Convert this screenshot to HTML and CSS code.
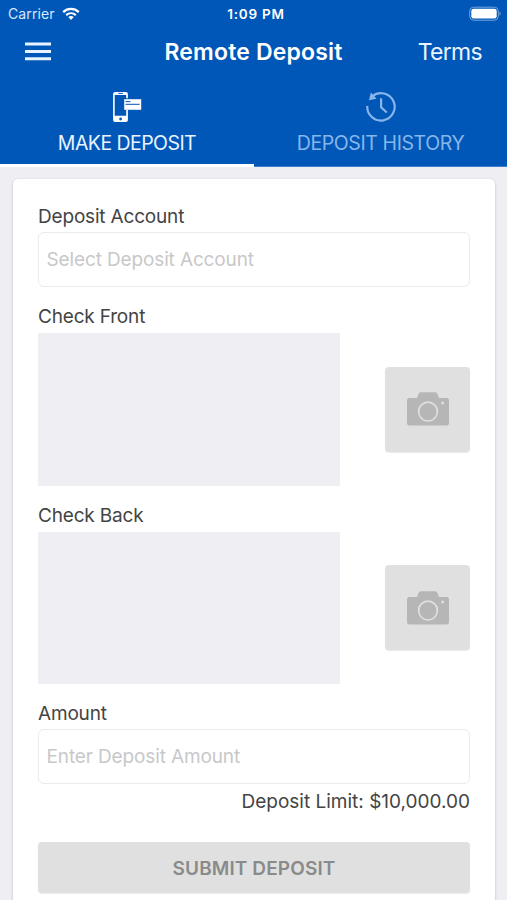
FILE: index.html
```html
<!DOCTYPE html>
<html lang="en">
<head>
<meta charset="utf-8">
<title>Remote Deposit</title>
<link rel="stylesheet" href="styles.css">
</head>
<body>
<header class="header">
  <div class="status">
    <div class="carrier"><span class="carrier-name">Carrier</span>
      <svg class="wifi" width="18" height="14" viewBox="0 0 18 14" fill="none" stroke="#fff" stroke-width="2.2"><path d="M1.2 5.1C5.7 .9 12.3 .9 16.8 5.1M4.2 8.1C7 5.6 11 5.6 13.8 8.1"/><path d="M6.3 10.1Q9 7.9 11.7 10.1L9 12.9Z" fill="#fff" stroke="none"/></svg>
    </div>
    <span class="time">1:09 PM</span>
    <svg class="battery" width="33" height="16" viewBox="0 0 33 16"><rect x=".7" y="1.2" width="28.6" height="13" rx="4" fill="none" stroke="#77a5dd" stroke-width="1"/><rect x="2.3" y="2.8" width="25.4" height="9.8" rx="2.4" fill="#fff"/><path d="M30.5 5.5Q33 7.7 30.5 10Z" fill="#77a5dd"/></svg>
  </div>
  <nav class="nav">
    <svg class="menu" width="26" height="19" viewBox="0 0 26 19" fill="#e8f4ff"><path d="M0 .5h26v3H0zM0 8h26v3H0zM0 15.2h26v3H0z"/></svg>
    <h1 class="title">Remote Deposit</h1>
    <a class="terms">Terms</a>
  </nav>
  <div class="tabs">
    <div class="tab active">
      <svg class="tab-icon" width="30" height="32" viewBox="0 0 30 32"><path fill="#fff" fill-rule="evenodd" d="M3.1 1h10.8a2 2 0 0 1 2 2v4.300h-1.700V4H2.700v20.800h11.500v-6h1.700V29a2 2 0 0 1-2 2H3.100a2 2 0 0 1-2-2V3a2 2 0 0 1 2-2z"/><path fill="#fff" d="M12.200 8.200h17v10.600h-17z"/><path d="M6.300 2.400h4.500" stroke="#0057b8" stroke-width="1"/><circle cx="8.600" cy="28" r="1.400" fill="#0057b8"/><path d="M13.500 10.600h5M13.500 13.300h14.200" stroke="#0057b8" stroke-width="1"/></svg>
      <span class="tab-label">MAKE DEPOSIT</span>
    </div>
    <div class="tab">
      <svg class="tab-icon" width="30" height="32" viewBox="0 0 30 32" fill="none" stroke="#86b6ea" stroke-width="2.200"><path d="M1.300 14.800A13.700 13.700 0 1 0 6.200 5.300M15.100 7.200V16.300L20.800 21.500"/><path d="M4.900 1.500L2.900 9.200L10.600 7.800Z" fill="#86b6ea" stroke="none"/></svg>
      <span class="tab-label history-label">DEPOSIT HISTORY</span>
    </div>
  </div>
</header>
<main class="card">
  <label class="label">Deposit Account</label>
  <div class="field">Select Deposit Account</div>
  <div class="label gap">Check Front</div>
  <div class="photo-row">
    <div class="preview"></div>
    <div class="camera"><svg width="42" height="34" viewBox="0 0 42 34"><path fill="#b6b6b6" d="M2.500 6H10l1.600-4.200Q12.200.2 13.800.2h14.400q1.600 0 2.200 1.600L32 6h7.500Q42 6 42 8.500v22.700q0 2.400-2.500 2.400h-37Q0 33.600 0 31.200V8.500Q0 6 2.500 6Z"/><circle cx="21" cy="19.600" r="9.400" fill="none" stroke="#e0e0e0" stroke-width="1.700"/><circle cx="35.700" cy="11" r="1.500" fill="#e0e0e0"/></svg></div>
  </div>
  <div class="label gap">Check Back</div>
  <div class="photo-row">
    <div class="preview"></div>
    <div class="camera"><svg width="42" height="34" viewBox="0 0 42 34"><path fill="#b6b6b6" d="M2.500 6H10l1.600-4.200Q12.200.2 13.800.2h14.400q1.600 0 2.200 1.600L32 6h7.500Q42 6 42 8.500v22.700q0 2.400-2.500 2.400h-37Q0 33.600 0 31.200V8.500Q0 6 2.500 6Z"/><circle cx="21" cy="19.600" r="9.400" fill="none" stroke="#e0e0e0" stroke-width="1.700"/><circle cx="35.700" cy="11" r="1.500" fill="#e0e0e0"/></svg></div>
  </div>
  <div class="label gap amount-label">Amount</div>
  <div class="field amount-field">Enter Deposit Amount</div>
  <div class="limit">Deposit Limit: $10,000.00</div>
  <button class="submit">SUBMIT DEPOSIT</button>
</main>
</body>
</html>
```
FILE: styles.css
```css
* { box-sizing: border-box; }
body {
  margin: 0;
  height: 900px;
  overflow: hidden;
  background: #eeeef3;
  font-family: Inter, "Liberation Sans", sans-serif;
  font-size: 19px;
  color: #444;
}
svg { display: block; }
.header { background: #0057b8; color: #fff; height: 167px; }
.status {
  display: grid;
  grid-template-columns: 1fr auto 1fr;
  height: 27px;
  align-items: center;
  padding: 0 5px 0 8px;
  font-size: 14px;
}
.carrier { display: flex; align-items: center; gap: 7px; color: #d5e8ff; }
.carrier-name { letter-spacing: 0.1px; }
.time { font-weight: 600; font-size: 13.5px; letter-spacing: 0.75px; padding-left: 2px; }
.battery { justify-self: end; }
.nav {
  display: grid;
  grid-template-columns: 1fr auto 1fr;
  align-items: center;
  height: 49px;
  padding: 0 25px;
}
.title { margin: 0; padding-top: 2px; font-size: 23px; font-weight: 600; line-height: 47px; letter-spacing: 0.18px; }
.terms { justify-self: end; font-size: 23px; letter-spacing: -0.7px; color: #e8f4ff; }
.tabs { display: grid; grid-template-columns: 254px 253px; height: 91px; }
.tab {
  display: flex;
  flex-direction: column;
  align-items: center;
  padding-top: 15px;
  color: #86b6ea;
  border-bottom: 1px solid #3c7dcc;
}
.active { color: #e8f4ff; border-bottom: 3px solid #fff; }
.tab-label { font-size: 19.5px; line-height: 24px; margin-top: 8px; white-space: nowrap; letter-spacing: -0.55px; }
.history-label { letter-spacing: -0.4px; }
.card {
  margin: 12px 12px 0 13px;
  height: 740px;
  padding: 21px 25px 0;
  background: #fff;
  border-radius: 5px 5px 0 0;
  box-shadow: 0 1px 3px rgba(0, 0, 0, 0.22);
}
.label { display: block; height: 32px; line-height: 33px; white-space: nowrap; letter-spacing: -0.18px; }
.gap { margin-top: 14px; line-height: 31px; }
.amount-label { line-height: 34px; margin-top: 13px; }
.field {
  height: 55px;
  line-height: 53px;
  padding-left: 7.5px;
  border: 1px solid #ebebeb;
  border-radius: 6px;
  letter-spacing: -0.13px;
  color: #c8c8ca;
}
.amount-field { line-height: 54px; }
.photo-row { display: flex; align-items: center; justify-content: space-between; }
.preview { width: 301.5px; height: 152.5px; background: #eeeef3; }
.camera {
  display: flex;
  align-items: center;
  justify-content: center;
  width: 85px;
  height: 85px;
  border-radius: 4px;
  background: #e0e0e0;
  box-shadow: 0 1px 1px rgba(0, 0, 0, 0.08);
}
.limit { height: 33px; line-height: 36px; text-align: right; white-space: nowrap; }
.submit {
  display: block;
  width: 100%;
  height: 51px;
  margin-top: 25px;
  padding: 1px 0 0;
  border: 0;
  border-radius: 4px;
  background: #e0e0e0;
  box-shadow: 0 1px 1px rgba(0, 0, 0, 0.08);
  color: #8a8a8a;
  font: 600 19px/51px Inter, "Liberation Sans", sans-serif;
  letter-spacing: 0.12px;
}
```
